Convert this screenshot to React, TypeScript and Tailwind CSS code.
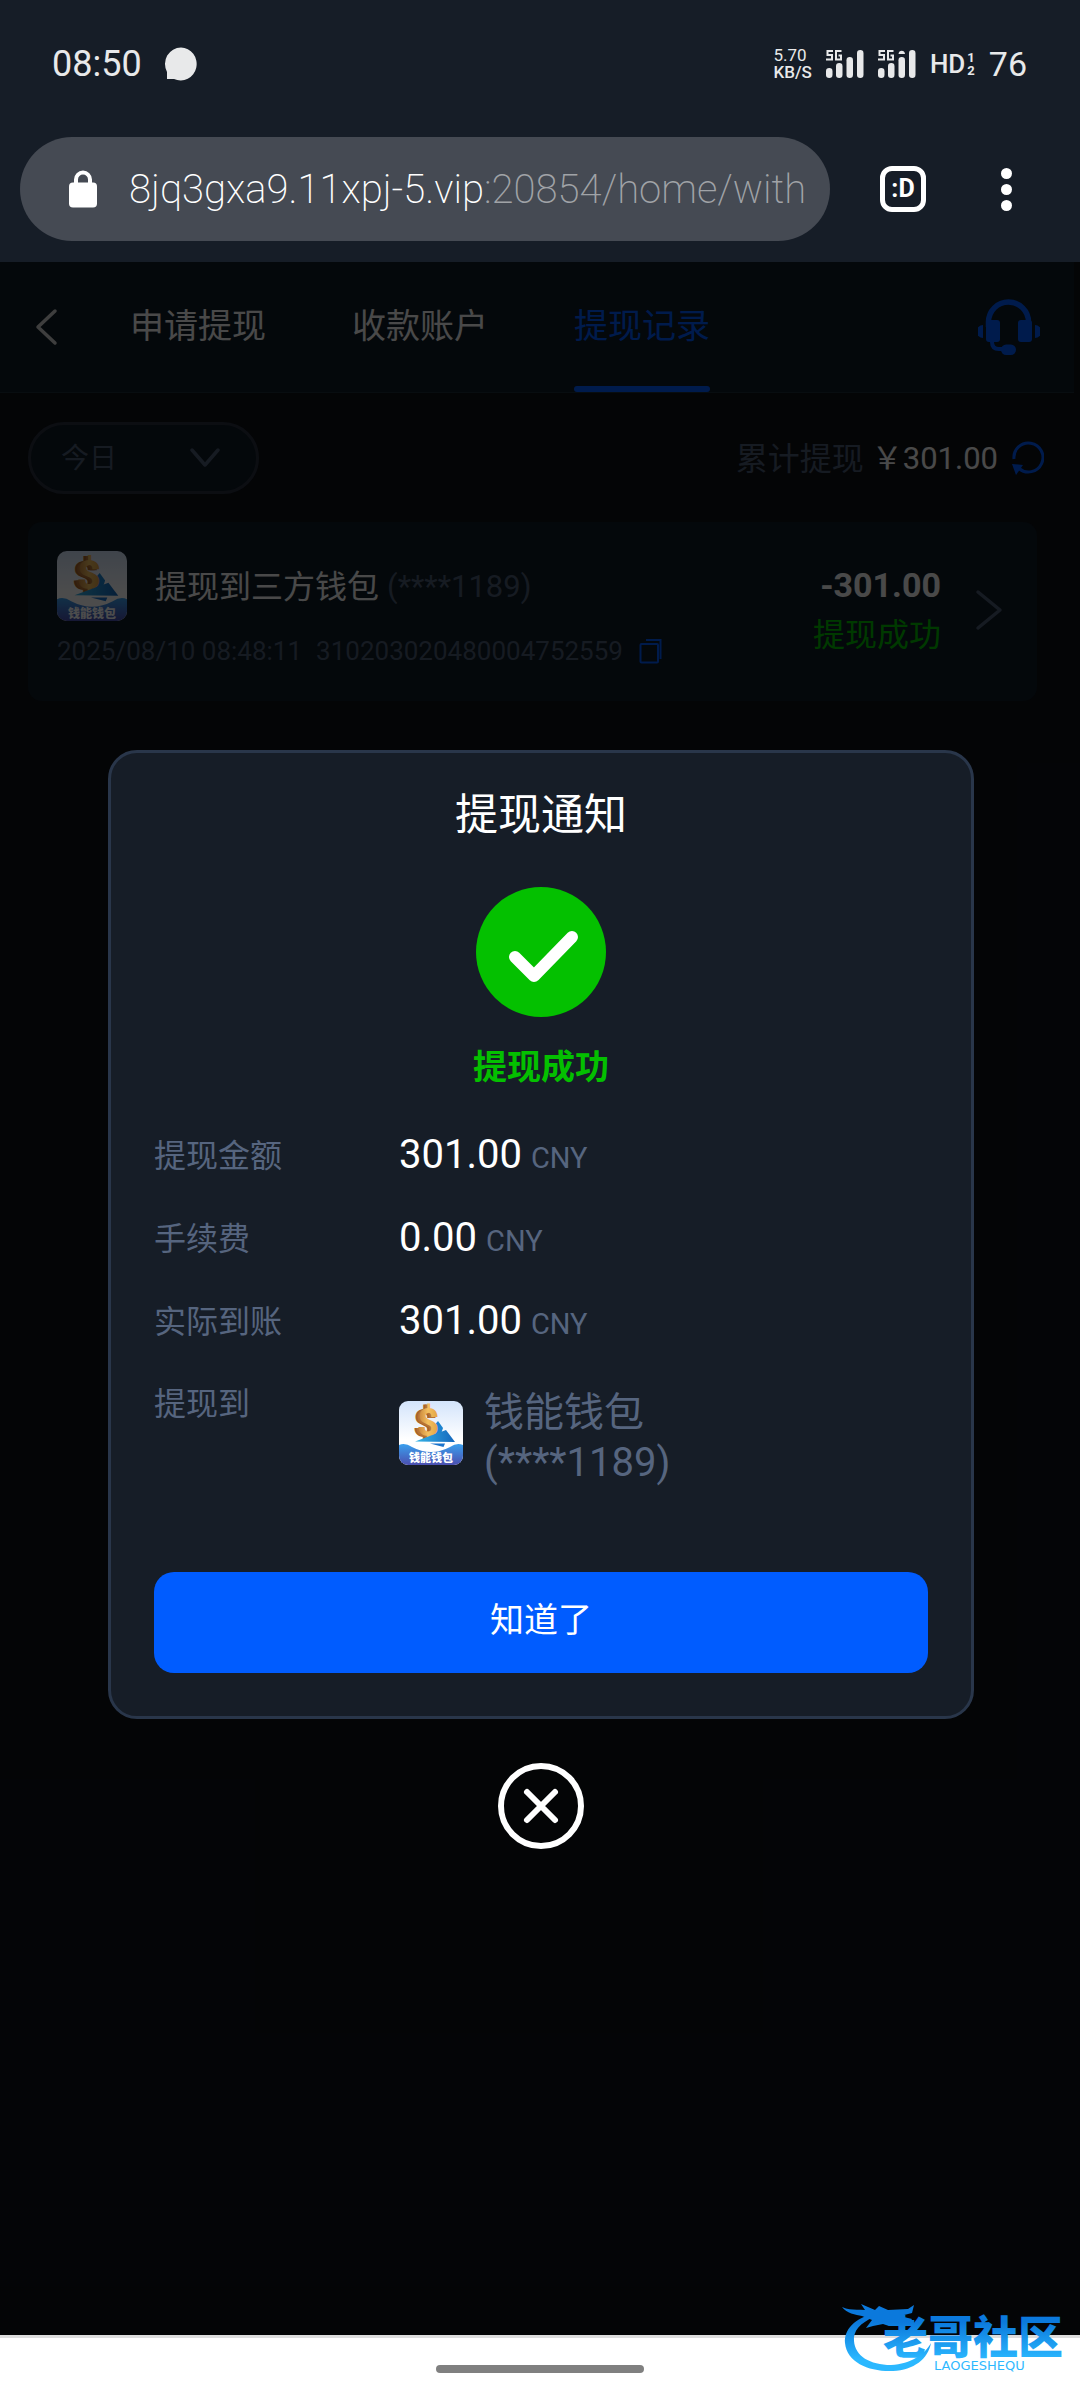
import React, { useState } from 'react';

interface IconProps {
  className?: string;
}

const LockIcon = ({ className }: IconProps) => (
  <svg viewBox="0 0 28 38" className={className} aria-hidden="true">
    <path d="M7 14V9.500a7 7 0 0 1 14 0V14" fill="none" stroke="currentColor" strokeWidth="4" />
    <rect x="0" y="12.500" width="28" height="25" rx="4" fill="currentColor" />
  </svg>
);

const SignalIcon = ({ split }: { split?: boolean }) => (
  <svg viewBox="0 0 38 30" className="h-[30px] w-[38px]" aria-hidden="true">
    <g fill="none" stroke="currentColor" strokeWidth="2">
      <path d="M7 2H1.500v4H6v4.500H0" />
      <path d="M15.500 2H10v8.500h5V6.500h-2.500" />
    </g>
    <g fill="currentColor">
      <rect x="0" y="19" width="6.500" height="10" rx="3.200" />
      <rect x="10" y="14" width="6.500" height="15" rx="3.200" />
      <rect x="20.500" y="8" width="6.500" height="21" rx="3.200" />
      {split && <path d="M20.500 5a3.300 4 0 0 1 6.500 0z" />}
      <rect x="31" y="1" width="6.500" height="28" rx="3.200" />
    </g>
  </svg>
);

const HeadsetIcon = ({ className }: IconProps) => (
  <svg viewBox="0 0 62 56" className={className} aria-hidden="true">
    <g fill="none" stroke="currentColor">
      <path d="M10.500 28V23a20 20 0 0 1 40 0v5" strokeWidth="5.500" />
      <path d="M14 40v3q0 7 7 7h9" strokeWidth="4" />
    </g>
    <g fill="currentColor">
      <rect x="8" y="21" width="14" height="22" rx="3" />
      <rect x="40" y="21" width="14" height="22" rx="3" />
      <rect x="23" y="45.500" width="15" height="10.500" rx="5.200" />
      <path d="M5 26v13a6.500 6.500 0 0 1 0-13zM57 26v13a6.500 6.500 0 0 0 0-13z" />
    </g>
  </svg>
);

const RefreshIcon = ({ className }: IconProps) => (
  <svg viewBox="0 0 32 34" className={className} aria-hidden="true">
    <path d="M2 18A14.500 14.500 0 1 1 7 27.500" fill="none" stroke="currentColor" strokeWidth="3" />
    <path d="M0 23l11 1-7 10z" fill="currentColor" />
  </svg>
);

const CopyIcon = ({ className }: IconProps) => (
  <svg viewBox="0 0 24 26" className={className} fill="none" stroke="currentColor" strokeWidth="2" aria-hidden="true">
    <rect x="1.500" y="6" width="17.500" height="18.500" rx="1" />
    <path d="M7 2h14.500v19" />
  </svg>
);

const Chevron = ({ d, box, className }: IconProps & { d: string; box: string }) => (
  <svg viewBox={box} className={className} fill="none" stroke="currentColor" strokeWidth="3.500" strokeLinecap="round" strokeLinejoin="round" aria-hidden="true">
    <path d={d} />
  </svg>
);

const WalletLogo = ({ id, className }: IconProps & { id: string }) => (
  <svg viewBox="0 0 64 64" className={className} role="img" aria-label="钱能钱包">
    <defs>
      <linearGradient id={`${id}-sky`} x1="0" y1="0" x2="0" y2="1">
        <stop offset="0" stopColor="#d3e4fb" />
        <stop offset="0.6" stopColor="#ffffff" />
      </linearGradient>
      <linearGradient id={`${id}-sea`} x1="0" y1="0" x2="0" y2="1">
        <stop offset="0" stopColor="#3aa0ee" />
        <stop offset="1" stopColor="#4b4fb0" />
      </linearGradient>
      <linearGradient id={`${id}-gold`} x1="0" y1="0" x2="1" y2="0">
        <stop offset="0" stopColor="#c27a35" />
        <stop offset="0.5" stopColor="#f3c060" />
        <stop offset="1" stopColor="#e0a040" />
      </linearGradient>
      <linearGradient id={`${id}-sail`} x1="0" y1="0" x2="1" y2="0">
        <stop offset="0" stopColor="#35b4e6" />
        <stop offset="1" stopColor="#1467bd" />
      </linearGradient>
      <clipPath id={`${id}-clip`}>
        <rect width="64" height="64" rx="9" />
      </clipPath>
    </defs>
    <g clipPath={`url(#${id}-clip)`}>
      <rect width="64" height="64" fill={`url(#${id}-sky)`} />
      <path d="M34 26l5-6 5 7-2 6-8 5z" fill="#1c83cf" />
      <g fontSize="38" fontWeight="900" fontFamily="Roboto, sans-serif">
        <text x="14" y="36" fill="#a8622a">$</text>
        <text x="16" y="36" fill="#b97333">$</text>
        <text x="18" y="35" fill={`url(#${id}-gold)`}>$</text>
      </g>
      <path d="M16 40.500L47 29l9 12z" fill={`url(#${id}-sail)`} />
      <path d="M31 42.500h15l-1.500 3.500z" fill="#1b74cc" />
      <path d="M0 44q6-3 13 2 19 10 38 0 7-5 13-2v20H0z" fill={`url(#${id}-sea)`} />
      <text x="32" y="61" fontSize="11" fontWeight="900" textAnchor="middle" fontFamily="'Noto Sans CJK SC', sans-serif" fill="#ffffff">钱能钱包</text>
    </g>
  </svg>
);

const CommunityLogo = ({ className }: IconProps) => (
  <svg viewBox="0 0 230 80" className={className} role="img" aria-label="老哥社区">
    <defs>
      <linearGradient id="community-blue" gradientUnits="userSpaceOnUse" x1="0" y1="24" x2="0" y2="62">
        <stop offset="0" stopColor="#0b79dc" />
        <stop offset="1" stopColor="#2bb8ff" />
      </linearGradient>
    </defs>
    <g fill="url(#community-blue)">
      <path d="M36 15C14 20 4 32 5 45c2 20 25 29 48 28 21-1 35-12 38-28-6 11-20 21-40 22-21 0-36-9-37-24-1-10 6-18 20-24z" />
      <path d="M2 9c8 4 14 2 23 3l-4-6 14 6 4-4 9 4 20-1 6-4-2 8-12 3 12 3-3 5-14-3-6 5-6-2-10 2-7 2 6-8-10-4C16 17 6 15 2 9z" />
      <text x="43" y="56" fontSize="45" fontWeight="900" fontFamily="'Noto Sans CJK SC', sans-serif">老哥社区</text>
      <text x="94" y="72" fontSize="13" fontFamily="'DejaVu Sans', sans-serif">LAOGESHEQU</text>
    </g>
  </svg>
);

const StatusBar = () => (
  <div className="flex h-[126px] items-center justify-between pl-[52px] pr-[53px] pt-[2px] text-[#e8e9ea]">
    <div className="flex items-center gap-[22px]">
      <span className="text-[36px] leading-10">08:50</span>
      <svg viewBox="0 0 34 34" className="size-[34px]" aria-hidden="true">
        <path d="M17 .5a16 16.500 0 1 1-7 31.500H3v-7A16 16.500 0 0 1 17 .5z" fill="currentColor" />
      </svg>
    </div>
    <div className="flex items-center gap-[14px]">
      <div className="flex flex-col text-[17px] leading-[17px]">
        <span>5.70</span>
        <span className="font-medium">KB/S</span>
      </div>
      <SignalIcon />
      <SignalIcon split />
      <div className="flex items-center gap-[2px]">
        <span className="text-[26px] font-medium leading-8">HD</span>
        <span className="flex flex-col text-[13px] font-bold leading-[13px]">
          <span>1</span>
          <span>2</span>
        </span>
      </div>
      <span className="text-[34px] leading-10">76</span>
    </div>
  </div>
);

const AddressBar = () => (
  <div className="flex items-center pb-[21px] pl-5 pr-[68px] pt-[11px] text-white">
    <button type="button" className="flex h-[104px] min-w-0 flex-1 items-center rounded-full bg-[#454a53] pl-[49px] pr-[26px]">
      <LockIcon className="h-[38px] w-7 shrink-0" />
      <span className="ml-8 overflow-hidden whitespace-nowrap pt-[2px] text-left text-[40px] font-extralight leading-[56px]">
        8jq3gxa9.11xpj-5.vip<span className="text-[#a0a3a7]">:20854/home/withdraw</span>
      </span>
    </button>
    <button type="button" aria-label="标签页" className="ml-[50px] flex size-[46px] items-center justify-center rounded-[12px] border-[5px] border-white text-[25px] font-bold leading-7">
      :D
    </button>
    <button type="button" aria-label="更多" className="ml-[75px] flex flex-col gap-[5px]">
      <i className="size-[11px] rounded-full bg-white" />
      <i className="size-[11px] rounded-full bg-white" />
      <i className="size-[11px] rounded-full bg-white" />
    </button>
  </div>
);

const TABS = ['申请提现', '收款账户', '提现记录'];

const PageNav = () => {
  const [active, setActive] = useState(2);

  return (
    <nav className="flex h-[131px] items-stretch border-b border-[#1b2c38] bg-[#0f1b25] pl-[34px] pr-[34px]">
      <button type="button" aria-label="返回" className="mr-[70px] text-[#d0d0d0]">
        <Chevron box="0 0 26 38" d="M21 3L4 19l17 16" className="h-[38px] w-[26px]" />
      </button>
      <div className="flex gap-[86px]">
        {TABS.map((tab, i) => (
          <button
            key={tab}
            type="button"
            onClick={() => setActive(i)}
            className={`flex flex-col text-[34px] leading-10 ${i === active ? 'text-[#005cff]' : 'text-[#f5f5f5]'}`}
          >
            <span className="flex flex-1 items-center pt-1">{tab}</span>
            <i className={`h-[6px] w-full rounded-full ${i === active ? 'bg-[#005cff]' : ''}`} />
          </button>
        ))}
      </div>
      <button type="button" aria-label="客服" className="ml-auto text-[#005cff]">
        <HeadsetIcon className="h-14 w-[62px]" />
      </button>
    </nav>
  );
};

const FilterRow = () => (
  <div className="flex items-center justify-between pb-7 pl-7 pr-[30px] pt-[29px]">
    <label className="relative flex items-center text-[#4b5a74]">
      <select aria-label="日期" className="h-[72px] w-[231px] appearance-none rounded-full border-[3px] border-[#29313f] bg-[#0f1b25] pl-[30px] pt-[2px] text-[28px]">
        <option>今日</option>
      </select>
      <Chevron box="0 0 30 20" d="M2 2l13 15L28 2" className="pointer-events-none absolute right-[39px] h-5 w-[30px]" />
    </label>
    <div className="flex items-center text-[32px] leading-10 text-[#4b5a74]">
      <span className="pt-[2px]">累计提现</span>
      <span className="ml-2 pt-[2px] text-[31px] text-[#f5f5f5]">￥301.00</span>
      <button type="button" aria-label="刷新" className="ml-[14px] text-[#005cff]">
        <RefreshIcon className="h-[34px] w-8" />
      </button>
    </div>
  </div>
);

const RecordCard = () => (
  <article className="ml-7 mr-[37px] flex items-center rounded-[14px] bg-[#0f1b25] pb-8 pl-[29px] pr-[34px] pt-[29px]">
    <div className="flex-1">
      <div className="flex items-center">
        <WalletLogo id="record" className="size-[70px]" />
        <span className="ml-7 pt-[2px] text-[32px] leading-10 text-[#f5f5f5]">提现到三方钱包</span>
        <span className="ml-2 pt-[2px] text-[31px] leading-10 text-[#4b5a74]">(****1189)</span>
      </div>
      <div className="mt-3 flex items-center text-[26px] leading-9 text-[#4b5a74]">
        <time>2025/08/10 08:48:11</time>
        <span className="ml-[14px]">310203020480004752559</span>
        <button type="button" aria-label="复制" className="ml-4 text-[#005cff]">
          <CopyIcon className="h-[26px] w-6" />
        </button>
      </div>
    </div>
    <div className="text-right">
      <p className="text-[34px] font-bold leading-[50px] text-[#f5f5f5]">-301.00</p>
      <p className="text-[32px] leading-[50px] text-[#00c000]">提现成功</p>
    </div>
    <Chevron box="0 0 28 42" d="M3 3l22 18L3 39" className="ml-[34px] h-[42px] w-7 text-[#4b5a74]" />
  </article>
);

const AMOUNTS = [
  { label: '提现金额', value: '301.00' },
  { label: '手续费', value: '0.00' },
  { label: '实际到账', value: '301.00' },
];

const NoticeDialog = () => (
  <div className="absolute inset-0 flex flex-col items-center justify-center gap-11 bg-black/70 pl-[108px] pr-[106px] pt-[2px]">
    <section role="dialog" aria-labelledby="notice-title" className="w-full rounded-[29px] border-[3px] border-[#29364a] bg-[#161d27] px-[43px] pb-[43px] pt-[34px]">
      <h2 id="notice-title" className="text-center text-[43px] leading-[56px] text-white">提现通知</h2>
      <svg viewBox="0 0 130 130" className="mx-auto mt-11 size-[130px]" aria-hidden="true">
        <circle cx="65" cy="65" r="65" fill="#04c000" />
        <path d="M39 70l19 19 38-39" fill="none" stroke="#ffffff" strokeWidth="12" strokeLinecap="round" strokeLinejoin="round" />
      </svg>
      <p className="mt-[26px] text-center text-[34px] font-bold leading-[48px] text-[#04c000]">提现成功</p>
      <dl className="mt-[22px] text-[#56657f]">
        {AMOUNTS.map(({ label, value }) => (
          <div key={label} className="flex h-[83px] items-center">
            <dt className="w-[245px] pt-[2px] text-[32px]">{label}</dt>
            <dd className="flex items-baseline gap-[9px] text-[29px]">
              <span className="text-[40px] text-white">{value}</span>
              <span>CNY</span>
            </dd>
          </div>
        ))}
        <div className="flex">
          <dt className="w-[245px] pt-[18px] text-[32px] leading-[48px]">提现到</dt>
          <dd className="flex items-center gap-[21px] pt-4">
            <WalletLogo id="notice" className="size-16" />
            <span className="flex flex-col pt-[10px] text-[40px] leading-[50px]">
              <span>钱能钱包</span>
              <span>(****1189)</span>
            </span>
          </dd>
        </div>
      </dl>
      <button type="button" className="mt-[84px] h-[101px] w-full rounded-[20px] bg-[#005cff] pb-1 text-[34px] text-white">
        知道了
      </button>
    </section>
    <button type="button" aria-label="关闭" className="text-white">
      <svg viewBox="0 0 86 86" className="size-[86px]" fill="none" stroke="currentColor" strokeWidth="6" strokeLinecap="round">
        <circle cx="43" cy="43" r="40" />
        <path d="M29 29l28 28M57 29L29 57" />
      </svg>
    </button>
  </div>
);

export default function App() {
  return (
    <div className="relative flex min-h-screen flex-col bg-[#161d27] font-['Roboto','Noto_Sans_CJK_SC',sans-serif]">
      <header>
        <StatusBar />
        <AddressBar />
      </header>
      <main className="relative flex-1 bg-[#0e1117] pr-[6px]">
        <PageNav />
        <FilterRow />
        <RecordCard />
        <NoticeDialog />
      </main>
      <footer className="flex h-[65px] items-center justify-center border-t-[3px] border-[#dddddd] bg-white">
        <i className="h-2 w-52 rounded-full bg-[#808080]" />
      </footer>
      <CommunityLogo className="absolute bottom-[22px] right-[10px] h-20 w-[230px]" />
    </div>
  );
}
